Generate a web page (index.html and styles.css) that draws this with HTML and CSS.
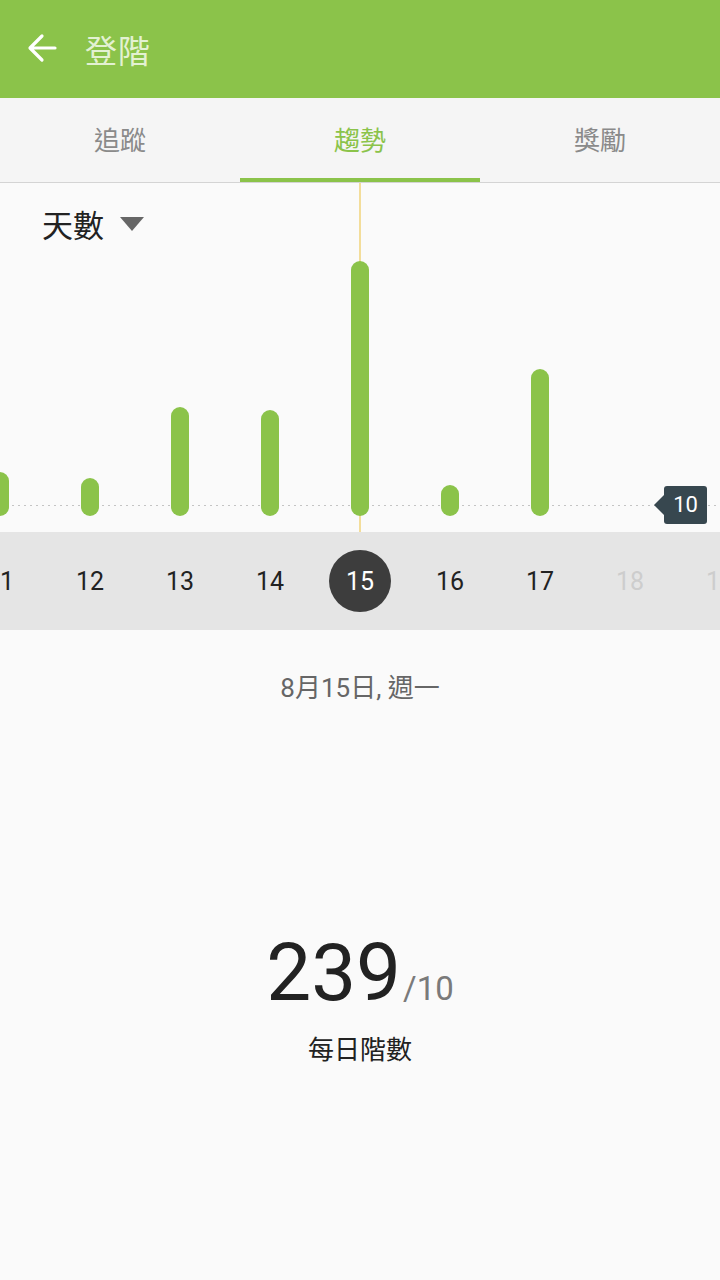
FILE: index.html
```html
<!DOCTYPE html>
<html lang="zh-Hant">
<head>
    <meta charset="UTF-8">
    <meta name="viewport" content="width=device-width, initial-scale=1.0">
    <title>登階</title>
    <link rel="stylesheet" href="styles.css">
</head>
<body>
    <header class="appbar">
        <svg class="back" width="32" height="32" viewBox="0 0 32 32">
            <path d="M29 16 H5 M16 4 L4 16 L16 28" fill="none" stroke="#fff" stroke-width="3.2" stroke-linecap="round" stroke-linejoin="round"/>
        </svg>
        <h1 class="title">登階</h1>
    </header>

    <nav class="tabs">
        <div class="tab">追蹤</div>
        <div class="tab active">趨勢</div>
        <div class="tab">獎勵</div>
    </nav>

    <section class="chart">
        <div class="guide"></div>
        <div class="baseline"></div>
        <div class="goal">10</div>
        <div class="range">天數 <span class="caret"></span></div>
        <div class="bars">
            <div class="col"><div class="bar" style="height:44px"></div></div>
            <div class="col"><div class="bar" style="height:38px"></div></div>
            <div class="col"><div class="bar" style="height:109px"></div></div>
            <div class="col"><div class="bar" style="height:106px"></div></div>
            <div class="col"><div class="bar" style="height:255px"></div></div>
            <div class="col"><div class="bar" style="height:31px"></div></div>
            <div class="col"><div class="bar" style="height:147px"></div></div>
            <div class="col"></div>
            <div class="col"></div>
        </div>
    </section>

    <div class="days">
        <div class="day">11</div>
        <div class="day">12</div>
        <div class="day">13</div>
        <div class="day">14</div>
        <div class="day"><span class="selected">15</span></div>
        <div class="day">16</div>
        <div class="day">17</div>
        <div class="day future">18</div>
        <div class="day future">19</div>
    </div>

    <main class="summary">
        <div class="date">8月15日, 週一</div>
        <div class="count"><span class="value">239</span><span class="target">/10</span></div>
        <div class="caption">每日階數</div>
    </main>
</body>
</html>
```

FILE: styles.css
```css
body {
    margin: 0;
    width: 720px;
    height: 1280px;
    overflow: hidden;
    background-color: #fafafa;
    font-family: Roboto, "Noto Sans CJK TC", sans-serif;
}
.appbar {
    height: 98px;
    background-color: #8bc34a;
    display: flex;
    align-items: center;
    padding-left: 26px;
    box-sizing: border-box;
}
.back {
    margin-top: -2px;
}
.title {
    margin: 0 0 0 27px;
    font-family: "Noto Sans CJK TC", sans-serif;
    font-weight: 400;
    font-size: 32px;
    color: #e3f1d2;
    letter-spacing: 1px;
}
.tabs {
    display: flex;
    height: 85px;
    background-color: #f5f5f5;
    border-bottom: 1px solid #d4d4d4;
    box-sizing: border-box;
}
.tab {
    flex: 1;
    display: flex;
    align-items: center;
    justify-content: center;
    font-family: "Noto Sans CJK TC", sans-serif;
    font-size: 26px;
    color: #8a8a8a;
    padding-bottom: 4px;
    box-sizing: border-box;
}
.tab.active {
    color: #8bc34a;
    border-bottom: 4px solid #8bc34a;
    padding-bottom: 0;
}
.chart {
    position: relative;
    height: 349px;
    overflow: hidden;
    display: flex;
    flex-direction: column;
    padding-bottom: 16px;
    box-sizing: border-box;
}
.guide {
    position: absolute;
    left: 359px;
    top: 0;
    bottom: 0;
    width: 2px;
    background-color: #f3dd9a;
}
.baseline {
    position: absolute;
    left: 0;
    right: 0;
    bottom: 26px;
    height: 1px;
    background: linear-gradient(to right, #c4c4c4 2px, transparent 2px) 0 0 / 6px 1px repeat-x;
}
.goal {
    position: absolute;
    right: 13px;
    bottom: 8px;
    width: 43px;
    height: 38px;
    line-height: 38px;
    text-align: center;
    background-color: #37474f;
    border-radius: 3px;
    color: #fff;
    font-size: 22px;
}
.goal::before {
    content: "";
    position: absolute;
    left: -10px;
    top: 9px;
    border-right: 10px solid #37474f;
    border-top: 10px solid transparent;
    border-bottom: 10px solid transparent;
}
.range {
    display: flex;
    align-items: center;
    gap: 16px;
    padding: 14px 0 0 42px;
    height: 66px;
    box-sizing: border-box;
    font-family: "Noto Sans CJK TC", sans-serif;
    font-size: 31px;
    color: #222;
    position: relative;
}
.caret {
    width: 0;
    height: 0;
    border-left: 12px solid transparent;
    border-right: 12px solid transparent;
    border-top: 14px solid #666;
    margin-top: 2px;
}
.bars {
    flex: 1;
    display: flex;
    align-items: flex-end;
    margin-left: -45px;
    position: relative;
}
.col {
    width: 90px;
    flex-shrink: 0;
    display: flex;
    justify-content: center;
}
.bar {
    width: 18px;
    border-radius: 9px;
    background-color: #8bc34a;
}
.days {
    display: flex;
    height: 98px;
    background-color: #e5e5e5;
    margin-left: -45px;
}
.day {
    width: 90px;
    flex-shrink: 0;
    display: flex;
    align-items: center;
    justify-content: center;
    font-size: 25px;
    color: #222;
}
.day.future {
    color: #cdcdcd;
}
.selected {
    width: 62px;
    height: 62px;
    border-radius: 50%;
    background-color: #3d3d3d;
    color: #fff;
    display: flex;
    align-items: center;
    justify-content: center;
}
.summary {
    display: flex;
    flex-direction: column;
    align-items: center;
}
.date {
    margin-top: 37px;
    font-size: 26px;
    color: #666;
}
.count {
    margin-top: 229px;
    display: flex;
    align-items: baseline;
    color: #222;
}
.value {
    font-size: 80px;
    line-height: 1;
}
.target {
    font-size: 33px;
    color: #7a7a7a;
    margin-left: 2px;
}
.caption {
    margin-top: 16px;
    font-family: "Noto Sans CJK TC", sans-serif;
    font-size: 26px;
    color: #222;
}
```
